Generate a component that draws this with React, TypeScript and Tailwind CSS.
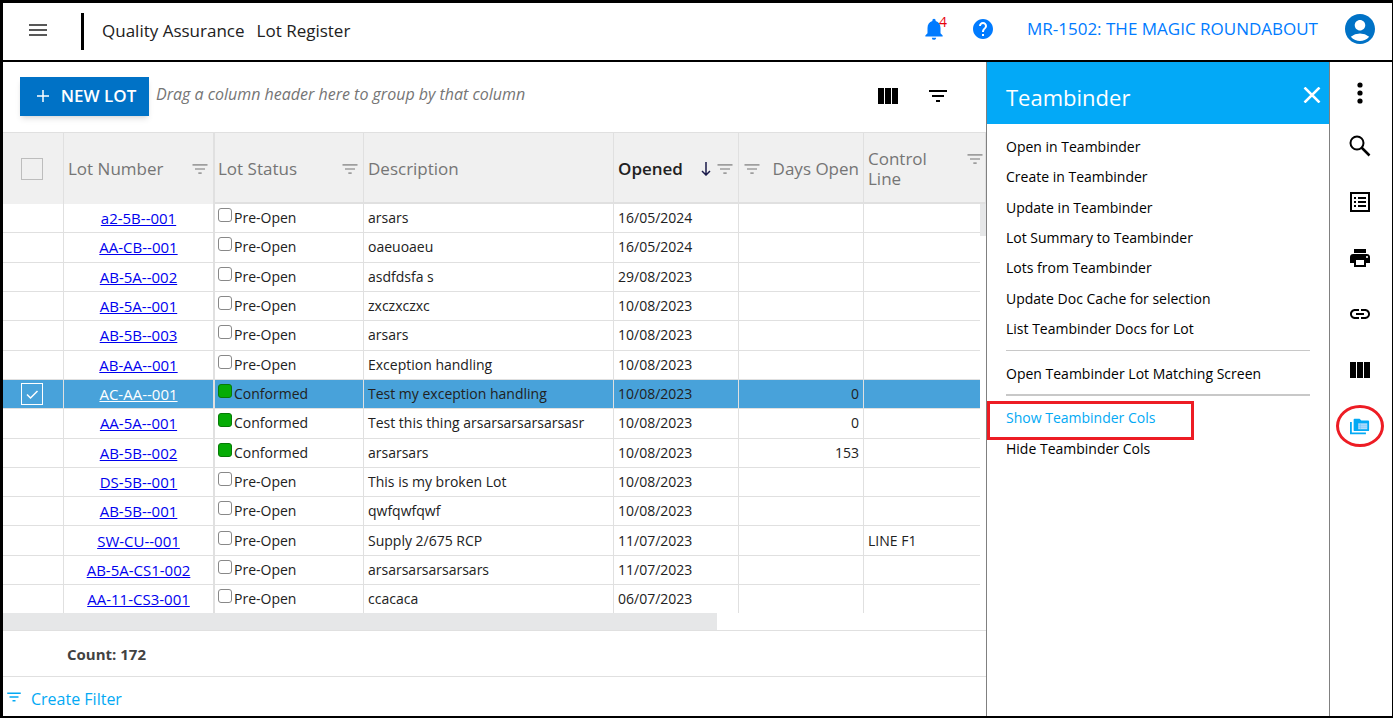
// src/App.tsx
import type { ReactNode } from 'react';
import { MdAccountCircle, MdFilterList, MdHelp, MdLink, MdNotifications, MdPrint } from 'react-icons/md';

interface Lot {
  number: string;
  conformed?: boolean;
  description: string;
  opened: string;
  daysOpen?: number;
  controlLine?: string;
  selected?: boolean;
}

const lots: Lot[] = [
  { number: 'a2-5B--001', description: 'arsars', opened: '16/05/2024' },
  { number: 'AA-CB--001', description: 'oaeuoaeu', opened: '16/05/2024' },
  { number: 'AB-5A--002', description: 'asdfdsfa s', opened: '29/08/2023' },
  { number: 'AB-5A--001', description: 'zxczxczxc', opened: '10/08/2023' },
  { number: 'AB-5B--003', description: 'arsars', opened: '10/08/2023' },
  { number: 'AB-AA--001', description: 'Exception handling', opened: '10/08/2023' },
  {
    number: 'AC-AA--001',
    conformed: true,
    description: 'Test my exception handling',
    opened: '10/08/2023',
    daysOpen: 0,
    selected: true,
  },
  {
    number: 'AA-5A--001',
    conformed: true,
    description: 'Test this thing arsarsarsarsarsasr',
    opened: '10/08/2023',
    daysOpen: 0,
  },
  { number: 'AB-5B--002', conformed: true, description: 'arsarsars', opened: '10/08/2023', daysOpen: 153 },
  { number: 'DS-5B--001', description: 'This is my broken Lot', opened: '10/08/2023' },
  { number: 'AB-5B--001', description: 'qwfqwfqwf', opened: '10/08/2023' },
  { number: 'SW-CU--001', description: 'Supply 2/675 RCP', opened: '11/07/2023', controlLine: 'LINE F1' },
  { number: 'AB-5A-CS1-002', description: 'arsarsarsarsarsars', opened: '11/07/2023' },
  { number: 'AA-11-CS3-001', description: 'ccacaca', opened: '06/07/2023' },
];

const teambinderActions = [
  'Open in Teambinder',
  'Create in Teambinder',
  'Update in Teambinder',
  'Lot Summary to Teambinder',
  'Lots from Teambinder',
  'Update Doc Cache for selection',
  'List Teambinder Docs for Lot',
];

const ColumnsIcon = () => (
  <svg width="20" height="16" viewBox="0 0 20 16" fill="currentColor">
    <path d="M0 0h6v16H0zM7 0h6v16H7zM14 0h6v16h-6z" />
  </svg>
);

const FoldersIcon = () => (
  <svg width="20" height="17" viewBox="0 0 22 18">
    <path d="M1 4v12.5h16.500" fill="none" stroke="#03a9f4" strokeWidth="2" />
    <path d="M4 1.500Q4 .5 5 .5h5.500l2 2H20q1 0 1 1V13q0 1-1 1H5q-1 0-1-1z" fill="#03a9f4" />
    <path d="M9 5.500h10v6.500H9z" fill="#b3dcfb" />
    <path d="M9 7.700h10M9 9.800h10M11.500 5.500v6.500" stroke="#6cc3fa" strokeWidth=".6" />
  </svg>
);

const TopBar = () => (
  <header className="flex h-[59px] shrink-0 items-center border-b-2 border-black pr-[14px]">
    <button aria-label="Menu" className="ml-[26px] mb-1">
      <svg width="18" height="12" viewBox="0 0 18 12" stroke="#222" strokeWidth="1.500">
        <path d="M0 1h18M0 6h18M0 11h18" />
      </svg>
    </button>
    <div className="ml-[34px] h-[37px] w-[3px] bg-black" />
    <h1 className="ml-[18px] flex gap-3 pb-[2px] text-[17px] text-[#212121]">
      <span>Quality Assurance</span>
      <span>Lot Register</span>
    </h1>
    <div className="mb-[5px] ml-auto flex items-center text-[#007bff]">
      <button aria-label="Notifications" className="relative">
        <MdNotifications size={26} />
        <span className="absolute -top-1 right-0 text-[14px] leading-5 text-red-600">4</span>
      </button>
      <button aria-label="Help" className="ml-6">
        <MdHelp size={24} />
      </button>
      <a href="#project" className="ml-8 text-[17px] font-medium">
        MR-1502: THE MAGIC ROUNDABOUT
      </a>
      <button aria-label="Account" className="ml-6 text-[#0072c6]">
        <MdAccountCircle size={36} />
      </button>
    </div>
  </header>
);

const Toolbar = () => (
  <div className="flex h-[70px] shrink-0 items-center pr-[36px] pb-[2px] pl-[17px]">
    <button className="flex h-[39px] w-[129px] items-center justify-center gap-3 bg-[#0072c6] pl-1 text-[17px] font-semibold text-white shadow-md">
      <svg width="12" height="12" viewBox="0 0 12 12" stroke="currentColor" strokeWidth="1.500">
        <path d="M6 0v12M0 6h12" />
      </svg>
      NEW LOT
    </button>
    <p className="ml-[7px] pb-1 text-[16px] italic text-[#757575]">Drag a column header here to group by that column</p>
    <button aria-label="Choose columns" className="ml-auto">
      <ColumnsIcon />
    </button>
    <button aria-label="Filter" className="ml-7">
      <MdFilterList size={24} />
    </button>
  </div>
);

const FilterButton = () => (
  <button aria-label="Filter column" className="shrink-0 text-[#9e9e9e]">
    <MdFilterList size={20} />
  </button>
);

const HeaderCell = ({ children, className = 'pl-1' }: { children: ReactNode; className?: string }) => (
  <th className={`border-t border-r border-b-2 border-[#e0e0e0] bg-[#f0f0f0] pt-[2px] text-left font-normal ${className}`}>
    {children}
  </th>
);

const LotRow = ({ lot }: { lot: Lot }) => {
  const line = 'border-b border-[#e0e0e0] group-last:border-b-0';
  const cell = `${line} border-r py-0`;
  return (
    <tr className={`group ${lot.selected ? 'bg-[#48a2da]' : 'bg-white'}`}>
      <td className={`${cell} pr-[2px]`}>
        {lot.selected && (
          <label className="relative -my-1 mx-auto block size-[22px]">
            <input
              type="checkbox"
              defaultChecked
              aria-label={`Select ${lot.number}`}
              className="block size-[22px] appearance-none border border-white"
            />
            <svg className="absolute inset-0" viewBox="0 0 22 22" fill="none" stroke="#fff" strokeWidth="1.500">
              <path d="M6 11.500l3.500 3.500L16.500 8" />
            </svg>
          </label>
        )}
      </td>
      <td className={`${line} border-r-2 p-0 text-center text-[15px] leading-5`}>
        <a href="#lot" className={`underline ${lot.selected ? 'text-white' : 'text-[#0000ee]'}`}>
          {lot.number}
        </a>
      </td>
      <td className={`${cell} pl-[3px]`}>
        <label className="flex h-5 items-start gap-[2px]">
          <input
            type="checkbox"
            defaultChecked={lot.conformed}
            className="size-[14px] shrink-0 appearance-none rounded-[3px] border border-[#888] bg-white checked:border-[#077a07] checked:bg-[#06ac06]"
          />
          {lot.conformed ? 'Conformed' : 'Pre-Open'}
        </label>
      </td>
      <td className={`${cell} px-1`}>{lot.description}</td>
      <td className={`${cell} px-1`}>{lot.opened}</td>
      <td className={`${cell} px-1 text-right`}>{lot.daysOpen}</td>
      <td className={`${line} px-1 py-0`}>{lot.controlLine}</td>
    </tr>
  );
};

const LotGrid = () => (
  <div className="relative min-h-0 flex-1">
    <table className="h-full w-full table-fixed border-separate border-spacing-0 text-[14px] leading-5 text-[#212121]">
      <colgroup>
        <col className="w-[61px]" />
        <col className="w-[151px]" />
        <col className="w-[149px]" />
        <col className="w-[250px]" />
        <col className="w-[125px]" />
        <col className="w-[125px]" />
        <col />
      </colgroup>
      <thead className="text-[17px] text-[#757575]">
        <tr className="h-[72px]">
          <th className="border-t border-r border-[#e0e0e0] bg-[#f0f0f0] p-0 pr-[2px]">
            <input
              type="checkbox"
              aria-label="Select all"
              className="mx-auto block size-[22px] appearance-none border border-[#bdbdbd]"
            />
          </th>
          <th className="border-t border-r-2 border-[#e0e0e0] bg-[#f0f0f0] pr-[3px] pl-1 text-left font-normal">
            <div className="flex items-center justify-between">
              Lot Number
              <FilterButton />
            </div>
          </th>
          <HeaderCell className="pr-[3px] pl-[3px]">
            <div className="flex items-center justify-between">
              Lot Status
              <FilterButton />
            </div>
          </HeaderCell>
          <HeaderCell>Description</HeaderCell>
          <HeaderCell className="pr-[3px] pl-1">
            <div className="flex items-center text-[#212121]">
              <span className="mr-auto font-semibold">Opened</span>
              <svg width="10" height="14" viewBox="0 0 10 14" fill="none" stroke="#1a1a4a" strokeWidth="1.500">
                <path d="M5 0v13M1 9l4 4 4-4" />
              </svg>
              <span className="ml-1 flex">
                <FilterButton />
              </span>
            </div>
          </HeaderCell>
          <HeaderCell className="pr-1 pl-[3px]">
            <div className="flex items-center justify-between">
              <FilterButton />
              Days Open
            </div>
          </HeaderCell>
          <HeaderCell className="pl-1">
            <div className="flex items-start justify-between">
              <span className="w-20">Control Line</span>
              <FilterButton />
            </div>
          </HeaderCell>
        </tr>
      </thead>
      <tbody>
        {lots.map((lot) => (
          <LotRow key={lot.number} lot={lot} />
        ))}
      </tbody>
    </table>
    <div className="absolute top-[72px] right-0 bottom-0 w-[6px] bg-white">
      <div className="h-8 bg-[#e6e7e8]" />
    </div>
  </div>
);

const TeambinderPanel = () => (
  <aside className="w-[344px] shrink-0 border-x border-[#808080] text-[14px] text-black">
    <div className="flex h-[62px] items-center justify-between bg-[#03a9f7] pr-2 pl-[19px] text-white">
      <h2 className="mt-2 text-[22px]">Teambinder</h2>
      <button aria-label="Close" className="mt-1">
        <svg width="18" height="16" viewBox="0 0 18 16" stroke="currentColor" strokeWidth="2.500">
          <path d="M1.500 .5l15 15M16.500 .5l-15 15" />
        </svg>
      </button>
    </div>
    <div className="px-[19px] pt-[7px]">
      <ul className="grid h-[213px] auto-rows-fr">
        {teambinderActions.map((action) => (
          <li key={action} className="flex items-center">
            <button>{action}</button>
          </li>
        ))}
      </ul>
      <hr className="mt-[6px] border-t border-[#c8c8c8]" />
      <button className="flex h-[43px] items-center pt-[2px]">Open Teambinder Lot Matching Screen</button>
      <hr className="border-t-2 border-[#c8c8c8]" />
      <div className="relative mt-[6px] flex h-[31px] items-center">
        <button className="text-[#03a9f4]">Show Teambinder Cols</button>
        <div className="absolute -top-[1px] -left-[19px] h-[39px] w-[207px] border-[3px] border-[#ed1c24]" />
      </div>
      <button className="flex h-[31px] items-center">Hide Teambinder Cols</button>
    </div>
  </aside>
);

const RailButton = ({ label, children }: { label: string; children: ReactNode }) => (
  <button aria-label={label} className="relative flex h-14 w-full items-center justify-center first:pt-[6px]">
    {children}
  </button>
);

const ActionRail = () => (
  <nav className="w-[62px] shrink-0 pr-[2px] text-black">
    <RailButton label="More">
      <svg width="6" height="22" viewBox="0 0 6 22" fill="currentColor">
        <circle cx="3" cy="3" r="2.600" />
        <circle cx="3" cy="11" r="2.600" />
        <circle cx="3" cy="19" r="2.600" />
      </svg>
    </RailButton>
    <RailButton label="Search">
      <svg width="22" height="22" viewBox="0 0 22 22" fill="none" stroke="currentColor" strokeWidth="2">
        <circle cx="8" cy="8" r="6.500" />
        <path d="M12.500 12.500l8 8" strokeWidth="2.500" />
      </svg>
    </RailButton>
    <RailButton label="Details">
      <svg width="20" height="20" viewBox="0 0 20 20" fill="none" stroke="currentColor" strokeWidth="2">
        <path d="M1 1h18v18H1zM4 6h2M8 6h8M4 10h2M8 10h8M4 14h2M8 14h8" />
      </svg>
    </RailButton>
    <RailButton label="Print">
      <MdPrint size={24} />
    </RailButton>
    <RailButton label="Link">
      <MdLink size={24} />
    </RailButton>
    <RailButton label="Columns">
      <ColumnsIcon />
    </RailButton>
    <RailButton label="Teambinder">
      <FoldersIcon />
      <span className="absolute h-[42px] w-12 rounded-[50%] border-[3px] border-[#ed1c24]" />
    </RailButton>
  </nav>
);

const App = () => {
  return (
    <div className="flex h-screen flex-col overflow-hidden border-t-[3px] border-r border-b-2 border-l-[3px] border-black bg-white font-['Open_Sans',sans-serif]">
      <TopBar />
      <div className="flex min-h-0 flex-1">
        <main className="flex min-w-0 flex-1 flex-col">
          <Toolbar />
          <LotGrid />
          <div className="h-[17px] w-[714px] shrink-0 bg-[#e6e7e8]" />
          <div className="flex h-[46px] shrink-0 items-center border-t border-[#e0e0e0] pt-[2px] pl-16 text-[15px] font-bold text-[#424242]">
            Count: 172
          </div>
          <div className="flex h-10 shrink-0 items-center gap-2 border-t border-[#e0e0e0] pl-[2px] text-[#03a9f4]">
            <MdFilterList size={18} />
            <button className="pt-1 text-[16px]">Create Filter</button>
          </div>
        </main>
        <TeambinderPanel />
        <ActionRail />
      </div>
    </div>
  );
};

export default App;
